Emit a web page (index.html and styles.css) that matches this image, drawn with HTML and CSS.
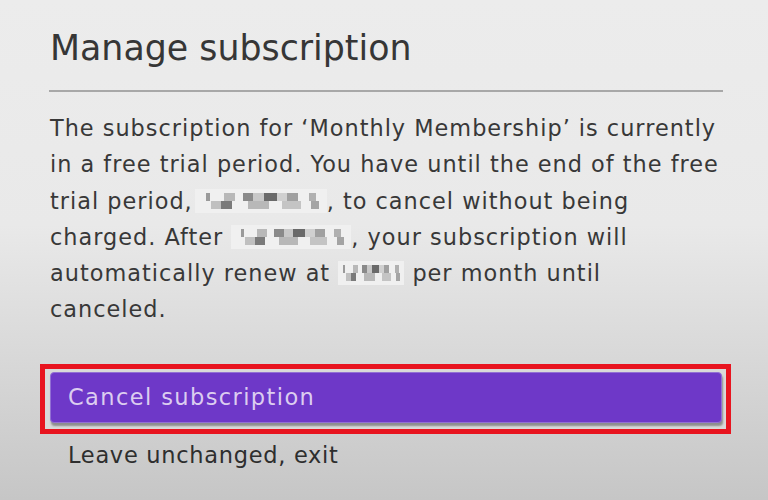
FILE: index.html
```html
<!DOCTYPE html>
<html>
<head>
<meta charset="utf-8">
<link rel="stylesheet" href="styles.css">
</head>
<body>
<div class="screen">
  <h1 class="title">Manage subscription</h1>
  <hr class="divider">
  <p class="message">The subscription for ‘Monthly Membership’ is currently in a free trial period. You have until the end of the free trial period,<span class="blur blur-a"></span>, to cancel without being charged. After <span class="blur blur-b"></span>, your subscription will automatically renew at <span class="blur blur-c"></span> per month until<br>canceled.</p>
  <div class="actions">
    <div class="highlight">
      <div class="btn btn-primary">Cancel subscription</div>
    </div>
    <div class="btn btn-plain">Leave unchanged, exit</div>
  </div>
</div>
</body>
</html>
```
FILE: styles.css
```css
html, body {
  margin: 0;
  padding: 0;
}
body {
  width: 768px;
  height: 500px;
  overflow: hidden;
  background: linear-gradient(180deg, #ececec 0%, #e9e9e9 45%, #d6d6d6 75%, #c6c6c6 100%);
  font-family: "DejaVu Sans", sans-serif;
  color: #383838;
}
.screen {
  padding: 26px 38px 0 50px;
  display: flex;
  flex-direction: column;
}
.title {
  margin: 0;
  font-size: 34.8px;
  font-weight: 400;
  line-height: 44px;
  color: #363636;
}
.divider {
  margin: 20px 0 0 -1px;
  border: 0;
  height: 2px;
  width: 674px;
  background: #a8a8a8;
}
.message {
  margin: 18px 0 0 0;
  font-size: 22.4px;
  line-height: 36.3px;
  letter-spacing: 1px;
  color: #383838;
  width: 680px;
}
.blur {
  display: inline-block;
  height: 24px;
  vertical-align: -4px;
  background:
    linear-gradient(90deg, transparent 0 8%, #9a9a9a 8% 11%, transparent 11% 22%, #b8b8b8 22% 30%, transparent 30% 36%, #8a8a8a 36% 44%, #c8c8c8 44% 52%, #6a6a6a 52% 62%, #d0d0d0 62% 70%, #a0a0a0 70% 78%, transparent 78% 86%, #b0b0b0 86% 92%, transparent 92%) 0 4px / 100% 8px no-repeat,
    linear-gradient(90deg, transparent 0 12%, #c0c0c0 12% 20%, #7a7a7a 20% 28%, transparent 28% 40%, #b8b8b8 40% 56%, transparent 56% 66%, #c4c4c4 66% 80%, transparent 80% 88%, #a4a4a4 88% 94%, transparent 94%) 0 12px / 100% 8px no-repeat,
    #f0f0f0;
}
.blur-a { width: 132px; margin-left: 2px; }
.blur-b { width: 120px; }
.blur-c { width: 66px; }
.actions {
  margin: 36px 0 0 -10px;
  display: flex;
  flex-direction: column;
}
.highlight {
  border: 5px solid #e8141f;
  padding: 3px 4px 6px 5px;
  width: 672px;
  background: #d9d9d9;
}
.btn {
  font-size: 22.5px;
}
.btn-primary {
  height: 49px;
  line-height: 49px;
  padding-left: 17px;
  background: #6e38c8;
  color: #dccdf0;
  letter-spacing: 1.4px;
  border: 1px solid #9270d4;
  border-radius: 4px;
  box-shadow: 1px 3px 2px rgba(0,0,0,0.35);
}
.btn-plain {
  margin-top: 1px;
  padding-left: 28px;
  line-height: 40px;
  letter-spacing: 0.7px;
  color: #2e2e2e;
}
```
